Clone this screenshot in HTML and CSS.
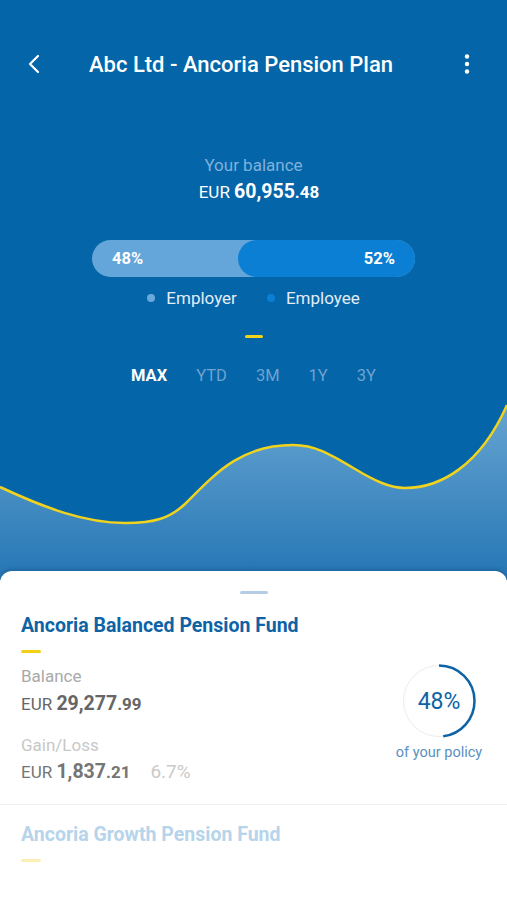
FILE: index.html
```html
<!DOCTYPE html>
<html>
<head>
<meta charset="utf-8">
<link rel="stylesheet" href="styles.css">
</head>
<body>
<div class="hero">
  <div class="topbar">
    <svg class="icon" width="20" height="20" viewBox="0 0 20 20"><path d="M14 2 L6 10 L14 18" fill="none" stroke="#fff" stroke-width="2.2" stroke-linecap="round" stroke-linejoin="round"/></svg>
    <div class="title">Abc Ltd - Ancoria Pension Plan</div>
    <svg class="icon kebab" width="20" height="20" viewBox="0 0 20 20"><circle cx="10" cy="2.5" r="2.2" fill="#fff"/><circle cx="10" cy="10" r="2.2" fill="#fff"/><circle cx="10" cy="17.5" r="2.2" fill="#fff"/></svg>
  </div>
  <div class="balance">
    <div class="balance-label">Your balance</div>
    <div class="balance-amount"><span class="cur">EUR </span><span class="big">60,955</span><span class="dec">.48</span></div>
  </div>
  <div class="bar">
    <span class="bar-left">48%</span>
    <span class="bar-right">52%</span>
  </div>
  <div class="legend">
    <span class="leg"><i class="dot dot1"></i>Employer</span>
    <span class="leg"><i class="dot dot2"></i>Employee</span>
  </div>
  <div class="ydash"></div>
  <div class="tabs">
    <span class="tab active">MAX</span>
    <span class="tab">YTD</span>
    <span class="tab">3M</span>
    <span class="tab">1Y</span>
    <span class="tab">3Y</span>
  </div>
  <svg class="chart" width="507" height="194" viewBox="0 0 507 194">
    <defs>
      <linearGradient id="g" x1="0" y1="0" x2="0" y2="1">
        <stop offset="0" stop-color="#66a4d1"/>
        <stop offset="1" stop-color="#2576b5"/>
      </linearGradient>
    </defs>
    <path d="M0,101 C45,122 85,137 125,137 C155,137 170,132 185,118 C215,88 240,59 293,59 C315,59 330,68 355,83 C375,95 390,102 405,102 C440,102 480,80 507,19 L507,194 L0,194 Z" fill="url(#g)"/>
    <path d="M0,101 C45,122 85,137 125,137 C155,137 170,132 185,118 C215,88 240,59 293,59 C315,59 330,68 355,83 C375,95 390,102 405,102 C440,102 480,80 507,19" fill="none" stroke="#f0d31e" stroke-width="2.5"/>
  </svg>
</div>
<div class="card">
  <div class="handle"></div>
  <div class="fund">
    <div class="fund-title">Ancoria Balanced Pension Fund</div>
    <div class="fdash"></div>
    <div class="fund-row">
      <div class="fund-left">
        <div class="lbl">Balance</div>
        <div class="amt"><span class="cur">EUR </span><span class="big">29,277</span><span class="dec">.99</span></div>
        <div class="lbl lbl2">Gain/Loss</div>
        <div class="amt"><span class="cur">EUR </span><span class="big">1,837</span><span class="dec">.21</span><span class="pct">6.7%</span></div>
      </div>
      <div class="fund-right">
        <div class="ring">
          <svg width="74" height="74" viewBox="0 0 74 74">
            <circle cx="37" cy="37" r="35.5" fill="none" stroke="#ececec" stroke-width="1"/>
            <circle cx="37" cy="37" r="35.5" fill="none" stroke="#0d63a5" stroke-width="2.5" stroke-dasharray="107.06 223.05" transform="rotate(-90 37 37)"/>
          </svg>
          <span class="ring-text">48%</span>
        </div>
        <div class="policy">of your policy</div>
      </div>
    </div>
  </div>
  <div class="fund fund2">
    <div class="fund-title faded">Ancoria Growth Pension Fund</div>
    <div class="fdash faded-dash"></div>
  </div>
</div>
</body>
</html>
```
FILE: styles.css
```css
* { box-sizing: border-box; }
html, body { margin: 0; padding: 0; }
body {
  width: 507px;
  height: 900px;
  overflow: hidden;
  background: #fff;
  font-family: Roboto, "Noto Sans", sans-serif;
  display: flex;
  flex-direction: column;
}
.hero {
  background: #0465a8;
  display: flex;
  flex-direction: column;
  align-items: center;
  flex: none;
}
.topbar {
  width: 100%;
  height: 128px;
  display: flex;
  align-items: center;
  padding: 0 30px 0 24px;
}
.icon { display: block; flex: none; }
.title {
  margin-left: 45px;
  color: #fff;
  font-size: 22px;
  font-weight: 500;
}
.kebab { margin-left: auto; }
.balance {
  margin-top: 27px;
  text-align: center;
}
.balance-label {
  color: #7fb1dc;
  font-size: 17px;
  line-height: 20px;
}
.balance-amount {
  margin-top: 5px;
  padding-left: 11px;
  color: #fff;
  line-height: 24px;
  font-size: 17px;
}
.balance-amount .big { font-size: 19.5px; font-weight: 700; }
.balance-amount .dec { font-weight: 700; }
.bar {
  margin-top: 36px;
  width: 323px;
  height: 37px;
  border-radius: 19px;
  background: #64a6da;
  display: flex;
  align-items: center;
  justify-content: space-between;
  color: #fff;
  font-size: 16.5px;
  font-weight: 700;
}
.bar-left { padding-left: 20px; }
.bar-right {
  width: 177px;
  height: 100%;
  border-radius: 19px;
  background: #0b7fd3;
  display: flex;
  align-items: center;
  justify-content: flex-end;
  padding-right: 20px;
}
.legend {
  margin-top: 11px;
  display: flex;
  gap: 30px;
  color: #e2edf7;
  font-size: 17px;
  line-height: 20px;
}
.leg { display: flex; align-items: center; }
.dot {
  width: 8px;
  height: 8px;
  border-radius: 50%;
  margin-right: 11px;
}
.dot1 { background: #6aa9dc; }
.dot2 { background: #0b7fd3; }
.ydash {
  margin-top: 27px;
  width: 18px;
  height: 3px;
  background: #f2d21b;
  border-radius: 2px;
}
.tabs {
  margin-top: 28px;
  display: flex;
  gap: 29px;
  font-size: 16.5px;
  line-height: 20px;
  color: #6ea3d0;
}
.tab.active { color: #fff; font-weight: 700; }
.chart { display: block; }
.card {
  position: relative;
  flex: 1;
  margin-top: -9px;
  background: #fff;
  border-radius: 12px 12px 0 0;
  box-shadow: 0 -2px 4px rgba(0, 40, 80, 0.25);
  display: flex;
  flex-direction: column;
}
.handle {
  align-self: center;
  margin-top: 20px;
  width: 28px;
  height: 3px;
  border-radius: 2px;
  background: #b4cde4;
}
.fund {
  padding: 20px 23px 20px 21px;
}
.fund-title {
  color: #0d63a5;
  font-size: 19.5px;
  font-weight: 700;
  line-height: 24px;
}
.fdash {
  margin-top: 12px;
  width: 20px;
  height: 3px;
  border-radius: 2px;
  background: #f5cf16;
}
.fund-row {
  display: flex;
  justify-content: space-between;
  margin-top: 13px;
}
.lbl {
  color: #a9a9a9;
  font-size: 17px;
  line-height: 20px;
}
.lbl2 { margin-top: 19px; color: #c8c8c8; }
.amt {
  margin-top: 6px;
  color: #666;
  font-size: 17px;
  line-height: 24px;
}
.lbl2 + .amt { margin-top: 5px; color: #757575; }
.amt .big { font-size: 19.5px; font-weight: 700; }
.amt .dec { font-weight: 700; }
.pct { margin-left: 20px; color: #cacaca; font-size: 19px; }
.fund-right {
  width: 90px;
  margin-top: -2px;
  display: flex;
  flex-direction: column;
  align-items: center;
}
.ring {
  position: relative;
  width: 74px;
  height: 74px;
}
.ring svg { display: block; }
.ring-text {
  position: absolute;
  inset: 0;
  display: flex;
  align-items: center;
  justify-content: center;
  color: #0d63a5;
  font-size: 23px;
}
.policy {
  margin-top: 6px;
  color: #5a90c2;
  font-size: 14.5px;
  line-height: 18px;
  white-space: nowrap;
}
.fund2 {
  border-top: 1px solid #efefef;
  padding-top: 18px;
}
.faded { color: #b6d4ea; }
.faded-dash { background: #fcefb6; }
```
